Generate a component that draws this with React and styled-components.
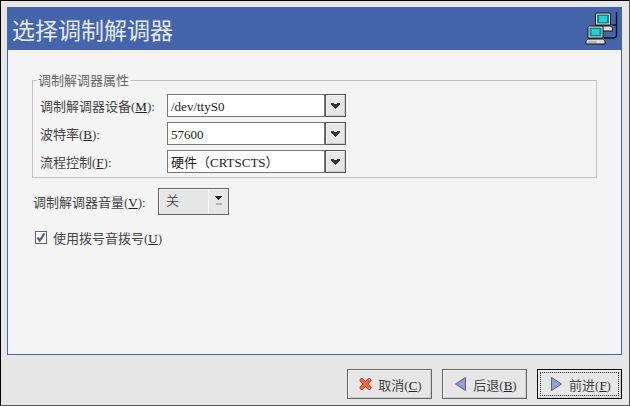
import React from 'react';
import styled, { createGlobalStyle } from 'styled-components';

const Global = createGlobalStyle`
  html, body { margin: 0; padding: 0; background: #e6e6e6; }
  * { box-sizing: border-box; }
`;

const cjk = `"Liberation Serif", "Noto Sans CJK SC", serif`;

const Window = styled.div`
  width: 630px;
  height: 406px;
  background: #e6e6e6;
  border: 1px solid #000;
  border-right-color: #555;
  border-bottom-color: #555;
  padding: 6px 7px 0 6px;
  display: flex;
  flex-direction: column;
  font-family: ${cjk};
  font-size: 13px;
  color: #333;
`;

const Panel = styled.div`
  height: 348px;
  border: 1px solid #4464ac;
  border-top: 0;
  background: #f4f4f4;
  display: flex;
  flex-direction: column;
`;

const Banner = styled.header`
  height: 43px;
  background: #4464ac;
  display: flex;
  align-items: center;
  justify-content: space-between;
  padding: 0 3px 0 4px;
  flex: none;
`;

const Title = styled.h1`
  margin: 0;
  font-size: 23px;
  font-weight: normal;
  color: #e6eaf4;
  font-family: "Noto Sans CJK SC", sans-serif;
`;

const Body = styled.div`
  padding: 25px 10px 0 24px;
  display: flex;
  flex-direction: column;
`;

const Group = styled.fieldset`
  margin: 0;
  padding: 8px 0 4px 7px;
  border: 1px solid #c2c2c2;
  width: 565px;
  display: flex;
  flex-direction: column;
  gap: 5px;
`;

const Legend = styled.legend`
  padding: 0 1px;
  margin-left: -3px;
  color: #666;
  line-height: 11px;
`;

const Row = styled.div`
  display: flex;
  align-items: center;
  height: 23px;
`;

const Label = styled.label`
  width: ${p => p.$w}px;
  padding-left: ${p => p.$indent || 0}px;
  flex: none;
  white-space: nowrap;
  color: #444;
  u { text-underline-offset: 1px; color: #222; }
`;

const Field = styled.div`
  width: 158px;
  height: 23px;
  background: #fff;
  border: 1px solid #777;
  padding: 1px 3px 0;
  line-height: 21px;
  color: #222;
  font-size: 13px;
`;

const Arrow = styled.div`
  width: 21px;
  height: 23px;
  background: #e6e6e6;
  border: 1px solid #555;
  box-shadow: inset 1px 1px 0 #f6f6f6, inset -1px -1px 0 #cccccc;
  display: flex;
  align-items: center;
  justify-content: center;
`;

const VolumeRow = styled.div`
  display: flex;
  align-items: center;
  height: 27px;
  margin-top: 10px;
`;

const Option = styled.div`
  width: 71px;
  height: 27px;
  background: #e6e6e6;
  border: 1px solid #666;
  display: flex;
  box-shadow: inset 1px 1px 0 #f4f4f4;
`;

const OptionText = styled.span`
  flex: 1;
  padding-left: 7px;
  line-height: 24px;
  color: #555;
`;

const OptionArrow = styled.span`
  width: 20px;
  border-left: 1px solid #f4f4f4;
  display: flex;
  flex-direction: column;
  align-items: center;
  padding-top: 7px;
  gap: 3px;
`;

const Dash = styled.i`
  width: 6px;
  height: 2px;
  background: #b4b4b4;
`;

const CheckRow = styled.div`
  display: flex;
  align-items: center;
  gap: 6px;
  margin-top: 13px;
  margin-left: 3px;
`;

const Box = styled.span`
  width: 12px;
  height: 13px;
  background: #fff;
  border: 1px solid #666;
  display: flex;
  align-items: center;
  justify-content: center;
`;

const Footer = styled.footer`
  flex: 1;
  display: flex;
  justify-content: flex-end;
  align-items: flex-start;
  gap: 10px;
  padding-top: 14px;
`;

const Button = styled.button`
  position: relative;
  width: 85px;
  height: 30px;
  padding: 0 0 0 2px;
  display: flex;
  align-items: center;
  justify-content: center;
  gap: 6px;
  font: 13px ${cjk};
  color: #444;
  background: #e6e6e6;
  border: 1px solid #666;
  box-shadow: inset 1px 1px 0 #f4f4f4, inset -1px -1px 0 #ccc;
  u { color: #222; }
  ${p => p.$focus && `
    border-color: #000;
    &::after {
      content: '';
      position: absolute;
      inset: 2px;
      border: 1px dotted #333;
    }
  `}
`;

const Chevron = () => (
  <svg width="9" height="6" viewBox="0 0 9 6" shapeRendering="crispEdges">
    <path fill="#333" d="M0 0h3v1h3V0h3v2H8v1H7v1H6v1H5v1H4V5H3V4H2V3H1V2H0z" />
  </svg>
);

const SmallDown = () => (
  <svg width="7" height="4" viewBox="0 0 7 4" shapeRendering="crispEdges">
    <path fill="#222" d="M0 0h7v1H6v1H5v1H4v1H3V3H2V2H1V1H0z" />
  </svg>
);

const Tick = () => (
  <svg width="10" height="11" viewBox="0 0 10 11">
    <path fill="none" stroke="#3f5da8" strokeWidth="2.2" d="M1.5 5.5l2.2 3L8.5 1.5" />
  </svg>
);

const Cross = () => (
  <svg width="13" height="14" viewBox="0 0 14 14">
    <path stroke="#a83a1c" strokeWidth="4.6" strokeLinecap="round" d="M3 3l8 8M11 3l-8 8" />
    <path stroke="#ef6a42" strokeWidth="3" strokeLinecap="round" d="M3 3l8 8M11 3l-8 8" />
  </svg>
);

const Triangle = ({ flip }) => (
  <svg width="13" height="16" viewBox="0 0 13 16" style={flip ? { transform: 'scaleX(-1)' } : undefined}>
    <path fill="#919fd8" stroke="#5a5e72" d="M1.5 1.5L11.5 8L1.5 14.5z" />
  </svg>
);

const Monitor = ({ x, y }) => (
  <g transform={`translate(${x} ${y})`}>
    <path fill="#e4e4dc" stroke="#111" d="M3.5.5h13l1 1v11h-15v-11z" />
    <rect x="4" y="2" width="12" height="9" fill="#0b8a92" />
    <rect x="6" y="3.5" width="8" height="6" fill="#25cfcf" />
    <path fill="#dcdcd4" stroke="#111" d="M2.5 13.5h15l2 2v3H.5v-3z" />
    <path stroke="#8a8a84" d="M3 16.5h8" />
  </g>
);

const Network = () => (
  <svg width="33" height="33" viewBox="0 0 33 33">
    <path fill="none" stroke="#111" strokeWidth="1.4" d="M31.5 0v23q0 3-3 3H19M27 13h4" />
    <Monitor x="8" y="0.5" />
    <Monitor x="0.5" y="13.5" />
  </svg>
);

const fields = [
  ['调制解调器设备(', 'M', '):', '/dev/ttyS0'],
  ['波特率(', 'B', '):', '57600'],
  ['流程控制(', 'F', '):', '硬件（CRTSCTS）'],
];

const App = () => (
  <Window>
    <Global />
    <Panel>
      <Banner>
        <Title>选择调制解调器</Title>
        <Network />
      </Banner>
      <Body>
        <Group>
          <Legend>调制解调器属性</Legend>
          {fields.map(([before, key, after, value]) => (
            <Row key={key}>
              <Label $w={127}>{before}<u>{key}</u>{after}</Label>
              <Field>{value}</Field>
              <Arrow><Chevron /></Arrow>
            </Row>
          ))}
        </Group>
        <VolumeRow>
          <Label $w={126} $indent={1}>调制解调器音量(<u>V</u>):</Label>
          <Option>
            <OptionText>关</OptionText>
            <OptionArrow><SmallDown /><Dash /></OptionArrow>
          </Option>
        </VolumeRow>
        <CheckRow>
          <Box><Tick /></Box>
          <Label>使用拨号音拨号(<u>U</u>)</Label>
        </CheckRow>
      </Body>
    </Panel>
    <Footer>
      <Button><Cross /><span>取消(<u>C</u>)</span></Button>
      <Button><Triangle flip /><span>后退(<u>B</u>)</span></Button>
      <Button $focus><Triangle /><span>前进(<u>F</u>)</span></Button>
    </Footer>
  </Window>
);

export default App;
